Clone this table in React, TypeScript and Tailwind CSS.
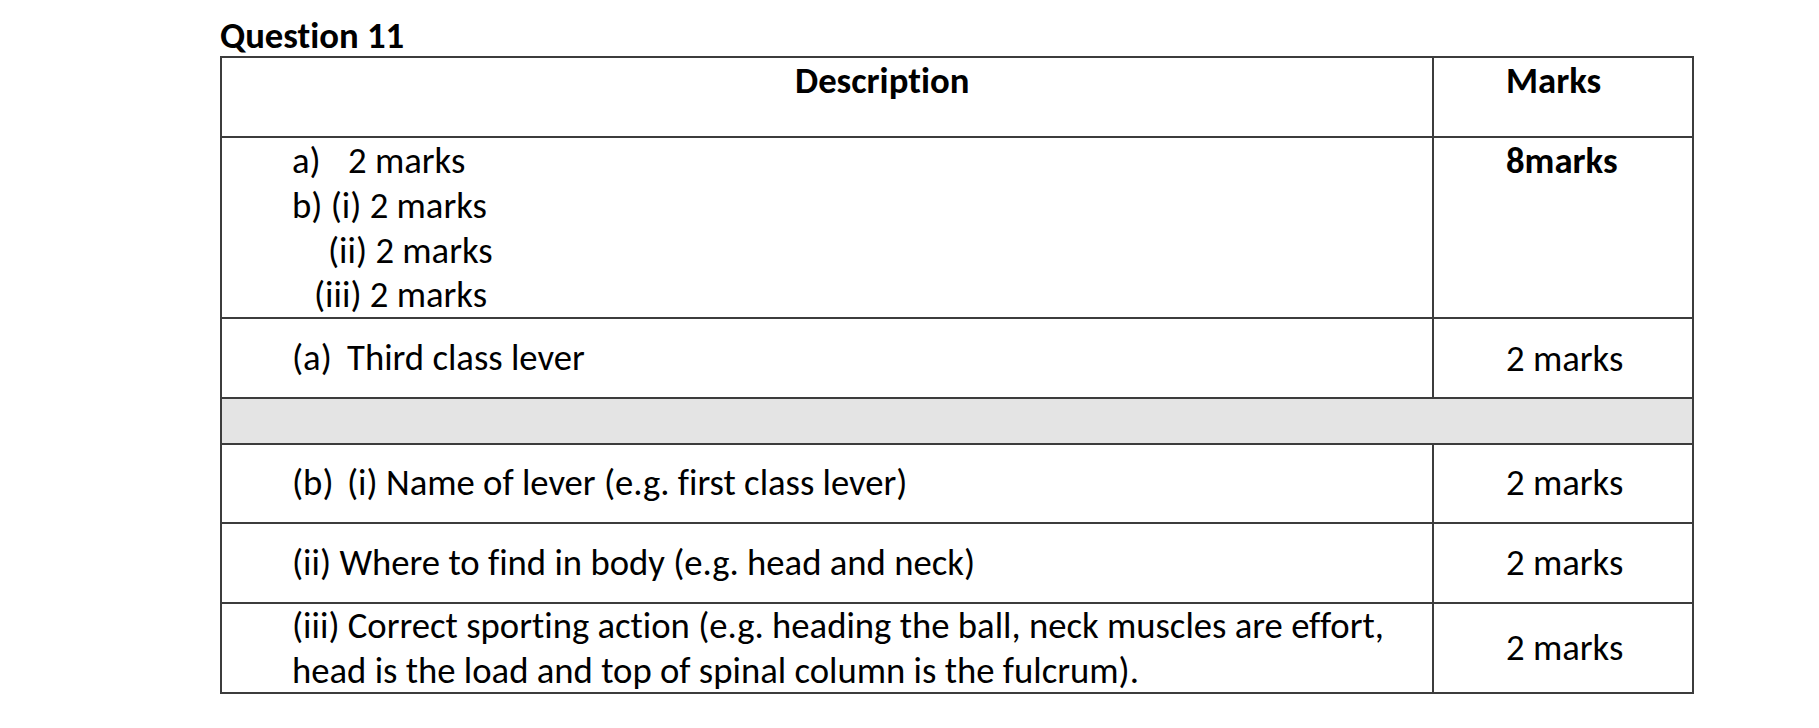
export default function App() {
  return (
    <div className="min-h-screen w-full bg-white font-['Carlito',Calibri,Lato,sans-serif] text-[36.7px] leading-[44.8px] text-black [font-variant-ligatures:none]">
      <div className="ml-[220px] pt-[16px] text-[36.7px] leading-[40px] font-bold">Question 11</div>
      <div className="ml-[220px] flex w-[1474px] flex-col border-2 border-[#3c3c3c]">
        {/* header */}
        <div className="flex h-[78px]">
          <div className="w-[1212px] border-r-2 border-[#3c3c3c] pl-[573px] pt-[1px] font-bold">Description</div>
          <div className="flex-1 pl-[72px] pt-[1px] font-bold">Marks</div>
        </div>

        {/* summary */}
        <div className="flex h-[181px] border-t-2 border-[#3c3c3c]">
          <div className="w-[1212px] border-r-2 border-[#3c3c3c] pl-[70px] pt-[1px]">
            <div className="flex">
              <span className="w-[56px]">a)</span>
              <span>2 marks</span>
            </div>
            <div>b) (i) 2 marks</div>
            <div className="pl-[36px]">(ii) 2 marks</div>
            <div className="pl-[22px]">(iii) 2 marks</div>
          </div>
          <div className="flex-1 pl-[72px] pt-[1px] font-bold">8marks</div>
        </div>

        {/* (a) */}
        <div className="flex h-[80px] border-t-2 border-[#3c3c3c]">
          <div className="flex w-[1212px] items-center border-r-2 border-[#3c3c3c] pl-[70px]">
            <span className="w-[55px]">(a)</span>
            <span>Third class lever</span>
          </div>
          <div className="flex flex-1 items-center pl-[72px] pt-[2px]">2 marks</div>
        </div>

        {/* shaded spacer */}
        <div className="h-[46px] border-t-2 border-[#3c3c3c] bg-[#e4e4e4]" />

        {/* (b)(i) */}
        <div className="flex h-[79px] border-t-2 border-[#3c3c3c]">
          <div className="flex w-[1212px] items-center border-r-2 border-[#3c3c3c] pl-[70px]">
            <span className="w-[55px]">(b)</span>
            <span>(i) Name of lever (e.g. first class lever)</span>
          </div>
          <div className="flex flex-1 items-center pl-[72px]">2 marks</div>
        </div>

        {/* (ii) */}
        <div className="flex h-[80px] border-t-2 border-[#3c3c3c]">
          <div className="flex w-[1212px] items-center border-r-2 border-[#3c3c3c] pl-[70px]">
            (ii) Where to find in body (e.g. head and neck)
          </div>
          <div className="flex flex-1 items-center pl-[72px]">2 marks</div>
        </div>

        {/* (iii) */}
        <div className="flex h-[90px] border-t-2 border-[#3c3c3c]">
          <div className="w-[1212px] border-r-2 border-[#3c3c3c] pl-[70px]">
            <div className="whitespace-nowrap">
              (iii) Correct sporting action (e.g. heading the ball, neck muscles are effort,
            </div>
            <div className="whitespace-nowrap">head is the load and top of spinal column is the fulcrum).</div>
          </div>
          <div className="flex flex-1 items-center pl-[72px]">2 marks</div>
        </div>
      </div>
    </div>
  )
}
